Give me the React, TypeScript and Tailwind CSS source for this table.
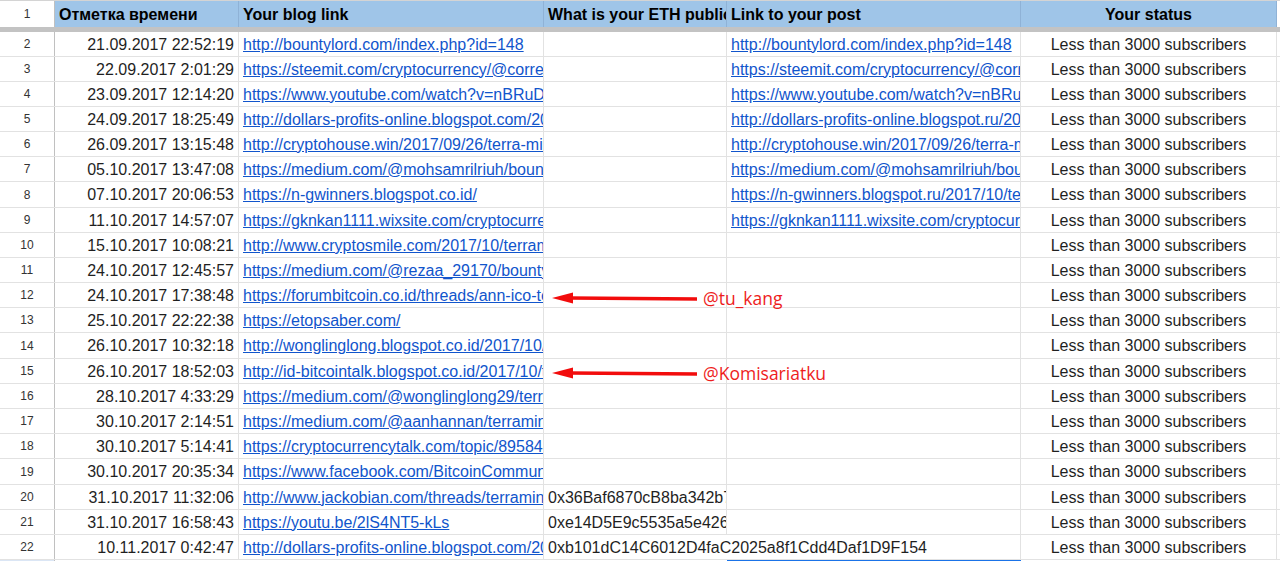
import React from 'react';

type Row = {
  n: number;
  ts: string;
  blog: string;
  eth?: string;
  post?: string;
};

const rows: Row[] = [
  { n: 2, ts: '21.09.2017 22:52:19', blog: 'http://bountylord.com/index.php?id=148', post: 'http://bountylord.com/index.php?id=148' },
  { n: 3, ts: '22.09.2017 2:01:29', blog: 'https://steemit.com/cryptocurrency/@correspondent', post: 'https://steemit.com/cryptocurrency/@correspondent' },
  { n: 4, ts: '23.09.2017 12:14:20', blog: 'https://www.youtube.com/watch?v=nBRuDDx', post: 'https://www.youtube.com/watch?v=nBRuDDx' },
  { n: 5, ts: '24.09.2017 18:25:49', blog: 'http://dollars-profits-online.blogspot.com/2017/10', post: 'http://dollars-profits-online.blogspot.ru/2017/10' },
  { n: 6, ts: '26.09.2017 13:15:48', blog: 'http://cryptohouse.win/2017/09/26/terra-mining', post: 'http://cryptohouse.win/2017/09/26/terra-mining' },
  { n: 7, ts: '05.10.2017 13:47:08', blog: 'https://medium.com/@mohsamrilriuh/bounty', post: 'https://medium.com/@mohsamrilriuh/bounty' },
  { n: 8, ts: '07.10.2017 20:06:53', blog: 'https://n-gwinners.blogspot.co.id/', post: 'https://n-gwinners.blogspot.ru/2017/10/terra' },
  { n: 9, ts: '11.10.2017 14:57:07', blog: 'https://gknkan1111.wixsite.com/cryptocurrency', post: 'https://gknkan1111.wixsite.com/cryptocurrency' },
  { n: 10, ts: '15.10.2017 10:08:21', blog: 'http://www.cryptosmile.com/2017/10/terramining' },
  { n: 11, ts: '24.10.2017 12:45:57', blog: 'https://medium.com/@rezaa_29170/bounty' },
  { n: 12, ts: '24.10.2017 17:38:48', blog: 'https://forumbitcoin.co.id/threads/ann-ico-terra' },
  { n: 13, ts: '25.10.2017 22:22:38', blog: 'https://etopsaber.com/' },
  { n: 14, ts: '26.10.2017 10:32:18', blog: 'http://wonglinglong.blogspot.co.id/2017/10/blog' },
  { n: 15, ts: '26.10.2017 18:52:03', blog: 'http://id-bitcointalk.blogspot.co.id/2017/10/terra' },
  { n: 16, ts: '28.10.2017 4:33:29', blog: 'https://medium.com/@wonglinglong29/terra' },
  { n: 17, ts: '30.10.2017 2:14:51', blog: 'https://medium.com/@aanhannan/terramining' },
  { n: 18, ts: '30.10.2017 5:14:41', blog: 'https://cryptocurrencytalk.com/topic/89584-terra' },
  { n: 19, ts: '30.10.2017 20:35:34', blog: 'https://www.facebook.com/BitcoinCommunity' },
  { n: 20, ts: '31.10.2017 11:32:06', blog: 'http://www.jackobian.com/threads/terramining', eth: '0x36Baf6870cB8ba342b7348c1' },
  { n: 21, ts: '31.10.2017 16:58:43', blog: 'https://youtu.be/2lS4NT5-kLs', eth: '0xe14D5E9c5535a5e4261f0b2' },
  { n: 22, ts: '10.11.2017 0:42:47', blog: 'http://dollars-profits-online.blogspot.com/2017/10', eth: '0xb101dC14C6012D4faC2025a8f1Cdd4Daf1D9F154' },
];

// a few rows in the screenshot are a pixel taller
const tallRows = [8, 14, 19];

const cell = 'shrink-0 overflow-hidden whitespace-nowrap border-r border-[#e2e2e2] px-[4px] flex items-center pt-[1px]';
const link = 'text-[#1155cc] underline';

function Arrow({ top, label }: { top: number; label: string }) {
  return (
    <div className="absolute left-[550px] flex items-center" style={{ top }}>
      <svg width="150" height="14" viewBox="0 0 150 14">
        <polygon points="2,7 23,1.5 23,12.5" fill="#f20c0c" />
        <line x1="20" y1="7" x2="147" y2="8" stroke="#f20c0c" strokeWidth="3.5" />
      </svg>
      <span className="ml-[3px] mt-[2px] font-['Open_Sans',sans-serif] text-[17.5px] leading-none text-[#ee1d1d]">{label}</span>
    </div>
  );
}

export default function App() {
  return (
    <div className="relative h-[561px] w-[1280px] overflow-hidden bg-white font-['Liberation_Sans',Arial,sans-serif] text-[16px] text-[#1f1f1f]">
      {/* header row */}
      <div className="flex h-[27px] border-t border-[#d4d4d4]">
        <div className="w-[55px] shrink-0 border-r border-[#c0c0c0] text-center text-[12px] leading-[26px] text-[#333]">1</div>
        {[
          ['Отметка времени', 'w-[184px]', ''],
          ['Your blog link', 'w-[305px]', ''],
          ['What is your ETH public address', 'w-[183px]', ''],
          ['Link to your post', 'w-[294px]', ''],
          ['Your status', 'w-[256px]', 'text-center'],
        ].map(([t, w, a]) => (
          <div key={t} className={`${w} ${a} shrink-0 overflow-hidden whitespace-nowrap border-r border-[#8fb2d6] bg-[#9fc5e8] px-[4px] font-bold leading-[27px] text-black`}>
            {t}
          </div>
        ))}
        <div className="flex-1" />
      </div>
      {/* frozen row divider */}
      <div className="h-[5px] bg-[#c3c3c3]" />

      {rows.map((r) => (
        <div key={r.n} className={`flex border-b border-[#e2e2e2] ${tallRows.includes(r.n) ? 'h-[26px]' : 'h-[25px]'}`}>
          <div className="flex w-[55px] shrink-0 items-center justify-center border-r border-[#c0c0c0] text-[12px] text-[#333]">{r.n}</div>
          <div className={`${cell} w-[184px] justify-end`}>{r.ts}</div>
          <div className={`${cell} w-[305px]`}>
            <span className={link}>{r.blog}</span>
          </div>
          {r.n === 22 ? (
            <div className={`${cell} w-[477px]`}>{r.eth}</div>
          ) : (
            <>
              <div className={`${cell} w-[183px]`}>{r.eth}</div>
              <div className={`${cell} w-[294px]`}>
                {r.post && <span className={link}>{r.post}</span>}
              </div>
            </>
          )}
          <div className={`${cell} w-[256px] justify-center`}>Less than 3000 subscribers</div>
          <div className="flex-1" />
        </div>
      ))}

      {/* partially visible row 23 with selected cell */}
      <div className="flex h-[6px]">
        <div className="w-[55px] shrink-0 border-r border-[#c0c0c0] bg-[#dbe6f5]" />
        <div className="w-[672px] shrink-0" />
        <div className="w-[294px] shrink-0 border-t-2 border-[#1a73e8]" />
      </div>

      <Arrow top={288} label="@tu_kang" />
      <Arrow top={363} label="@Komisariatku" />
    </div>
  );
}
